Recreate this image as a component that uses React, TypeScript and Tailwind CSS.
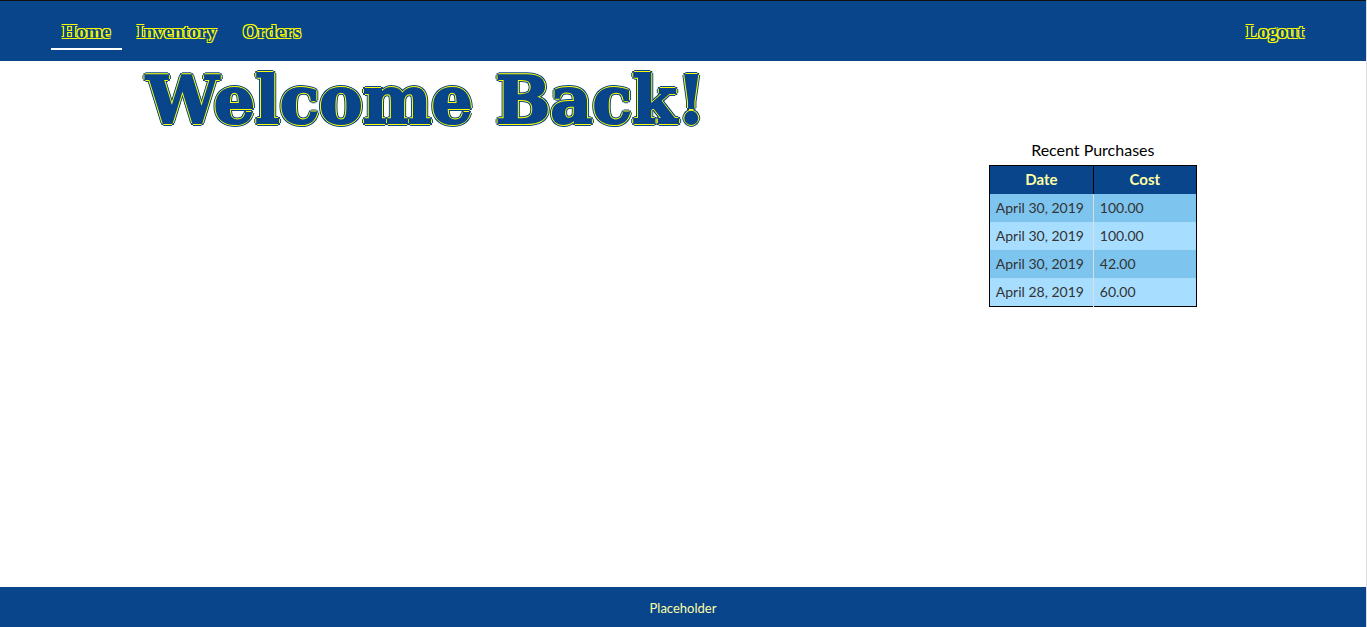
const purchases = [
  { date: "April 30, 2019", cost: "100.00" },
  { date: "April 30, 2019", cost: "100.00" },
  { date: "April 30, 2019", cost: "42.00" },
  { date: "April 28, 2019", cost: "60.00" },
];

const navLink =
  "flex h-8 items-center border-b-2 px-[11px] pb-0.5 font-['Liberation_Serif',serif] text-[19px] font-bold text-[#08458a] [text-shadow:-1px_-1px_0_#ff0,1px_-1px_0_#ff0,-1px_1px_0_#ff0,1px_1px_0_#ff0]";

function Header() {
  return (
    <header className="h-[61px] border-t border-[#111] bg-[#08458a] px-[51px]">
      <nav className="flex items-center justify-between pt-[17px]">
        <div className="flex gap-1">
          <a href="#home" aria-current="page" className={navLink + " border-white"}>
            Home
          </a>
          <a href="#inventory" className={navLink + " border-transparent"}>
            Inventory
          </a>
          <a href="#orders" className={navLink + " border-transparent"}>
            Orders
          </a>
        </div>
        <a href="#logout" className={navLink + " border-transparent"}>
          Logout
        </a>
      </nav>
    </header>
  );
}

function RecentPurchases() {
  return (
    <table className="w-[208px] table-fixed border-collapse border border-black text-sm text-[#333]">
      <caption className="pb-[3px] text-base leading-6 text-black">Recent Purchases</caption>
      <thead>
        <tr className="h-7 bg-[#08458a] text-[15px] text-[#ffffa6]">
          <th scope="col" className="w-[104px] border-r border-black font-bold">Date</th>
          <th scope="col" className="font-bold">Cost</th>
        </tr>
      </thead>
      <tbody>
        {purchases.map((purchase, index) => (
          <tr key={index} className="h-7 last:h-[29px] odd:bg-[#7dc5ef] even:bg-[#a7deff]">
            <td className="border-r border-[#ddd] pl-1.5 whitespace-nowrap">{purchase.date}</td>
            <td className="pl-1.5">{purchase.cost}</td>
          </tr>
        ))}
      </tbody>
    </table>
  );
}

export default function App() {
  return (
    <div className="flex min-h-screen flex-col border-r border-[#ddd] bg-white font-['Lato',sans-serif]">
      <Header />
      <main className="grid grow grid-cols-[3fr_2fr] items-start">
        <h1 className="pt-[3px] pl-8 text-center font-['DejaVu_Serif',serif] text-[65px] leading-[72px] font-bold whitespace-nowrap text-[#08458a] [-webkit-text-stroke:2px_#08458a] [text-shadow:-2px_0_0_#ff0,2px_0_0_#ff0,0_-2px_0_#ff0,0_2px_0_#ff0,-1px_-1px_0_#ff0,1px_-1px_0_#ff0,-1px_1px_0_#ff0,1px_1px_0_#ff0,-3px_0_0_#08458a,3px_0_0_#08458a,0_-3px_0_#08458a,0_3px_0_#08458a,-2px_-2px_0_#08458a,2px_-2px_0_#08458a,-2px_2px_0_#08458a,2px_2px_0_#08458a]">
          Welcome Back!
        </h1>
        <section className="flex justify-center pt-[77px]">
          <RecentPurchases />
        </section>
      </main>
      <footer className="flex h-10 items-center justify-center bg-[#08458a] pt-[3px] text-[13px] text-[#ffffa6]">
        Placeholder
      </footer>
    </div>
  );
}
